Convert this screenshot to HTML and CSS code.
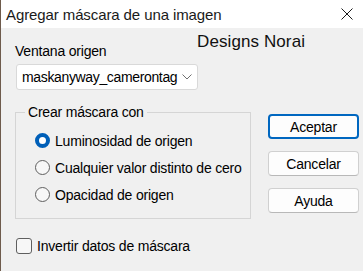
FILE: index.html
```html
<!DOCTYPE html>
<html lang="es">
<head>
  <meta charset="UTF-8" />
  <title>Agregar máscara de una imagen</title>
  <link rel="stylesheet" href="styles.css">
</head>
<body>
  <div class="window">
    <div class="titlebar">
      <span class="title">Agregar máscara de una imagen</span>
      <svg class="close" width="12" height="12" viewBox="0 0 12 12">
        <path d="M0.5 0.5 L11.5 11.5 M11.5 0.5 L0.5 11.5" stroke="#1a1a1a" stroke-width="1" fill="none" />
      </svg>
    </div>

    <div class="content">
      <div class="top-row">
        <div class="source">
          <div class="label">Ventana origen</div>
          <div class="combo">
            <span>maskanyway_camerontag</span>
            <svg width="10" height="6" viewBox="0 0 10 6">
              <path d="M0.5 0.5 L5 5 L9.5 0.5" stroke="#707070" stroke-width="1" fill="none" />
            </svg>
          </div>
        </div>
        <div class="brand">Designs Norai</div>
      </div>

      <div class="middle-row">
        <fieldset class="group">
          <legend>Crear máscara con</legend>
          <div class="options">
            <div class="option"><span class="radio checked"></span>Luminosidad de origen</div>
            <div class="option"><span class="radio"></span>Cualquier valor distinto de cero</div>
            <div class="option"><span class="radio"></span>Opacidad de origen</div>
          </div>
        </fieldset>

        <div class="buttons">
          <div class="button default">Aceptar</div>
          <div class="button">Cancelar</div>
          <div class="button">Ayuda</div>
        </div>
      </div>

      <div class="check-row">
        <span class="checkbox"></span>Invertir datos de máscara
      </div>
    </div>
  </div>
</body>
</html>
```

FILE: styles.css
```css
body {
  margin: 0;
  padding: 0;
  font-family: "Liberation Sans", Arial, sans-serif;
  color: #000;
}

.window {
  width: 363px;
  height: 271px;
  box-sizing: border-box;
  border-left: 1px solid #6e5b4c;
  background-color: #f0f0f0;
  overflow: hidden;
}

.titlebar {
  height: 28px;
  background-color: #fff;
  display: flex;
  align-items: center;
  justify-content: space-between;
  padding: 0 10px 0 5px;
}

.title {
  font-size: 15px;
  color: #1a1a1a;
  letter-spacing: -0.1px;
}

.close {
  margin-top: -1px;
}

.content {
  padding: 4px 0 0 14px;
  font-size: 14px;
  letter-spacing: -0.2px;
}

.top-row {
  display: flex;
  align-items: flex-start;
}

.source {
  width: 183px;
  padding-top: 11px;
}

.label {
  line-height: 16px;
}

.combo {
  margin: 5px 0 0 1px;
  height: 26px;
  box-sizing: border-box;
  background-color: #fff;
  border: 1px solid #d9d9d9;
  border-radius: 3px;
  display: flex;
  align-items: center;
  justify-content: space-between;
  padding: 0 5px 0 5px;
  letter-spacing: -0.35px;
}

.brand {
  font-size: 17px;
  line-height: 20px;
  letter-spacing: 0.1px;
  color: #111;
  margin-left: -1px;
}

.middle-row {
  display: flex;
  align-items: flex-start;
  margin-top: 13px;
}

.group {
  width: 236px;
  box-sizing: border-box;
  margin: 0;
  padding: 6px 0 10px 9px;
  border: 1px solid #d5d5d5;
}

.group legend {
  padding: 0 3px;
  line-height: 18px;
}

.options {
  padding-left: 10px;
}

.option {
  height: 27px;
  display: flex;
  align-items: center;
  white-space: nowrap;
}

.radio {
  width: 15px;
  height: 15px;
  box-sizing: border-box;
  border: 1px solid #5f5f5f;
  border-radius: 50%;
  background-color: #f7f7f7;
  margin-right: 5px;
  flex-shrink: 0;
}

.radio.checked {
  border: 4px solid #005fb8;
  background-color: #fff;
}

.buttons {
  margin: 11px 0 0 17px;
  display: flex;
  flex-direction: column;
  gap: 12px;
}

.button {
  width: 91px;
  height: 25px;
  box-sizing: border-box;
  background-color: #fdfdfd;
  border: 1px solid #d0d0d0;
  border-bottom-color: #b8b8b8;
  border-radius: 4px;
  display: flex;
  align-items: center;
  justify-content: center;
}

.button.default {
  border: 2px solid #0067c0;
}

.check-row {
  margin-top: 18px;
  height: 18px;
  display: flex;
  align-items: center;
}

.checkbox {
  width: 16px;
  height: 16px;
  box-sizing: border-box;
  border: 1px solid #5f5f5f;
  border-radius: 3px;
  background-color: #f7f7f7;
  margin: 0 5px 0 1px;
}
```
